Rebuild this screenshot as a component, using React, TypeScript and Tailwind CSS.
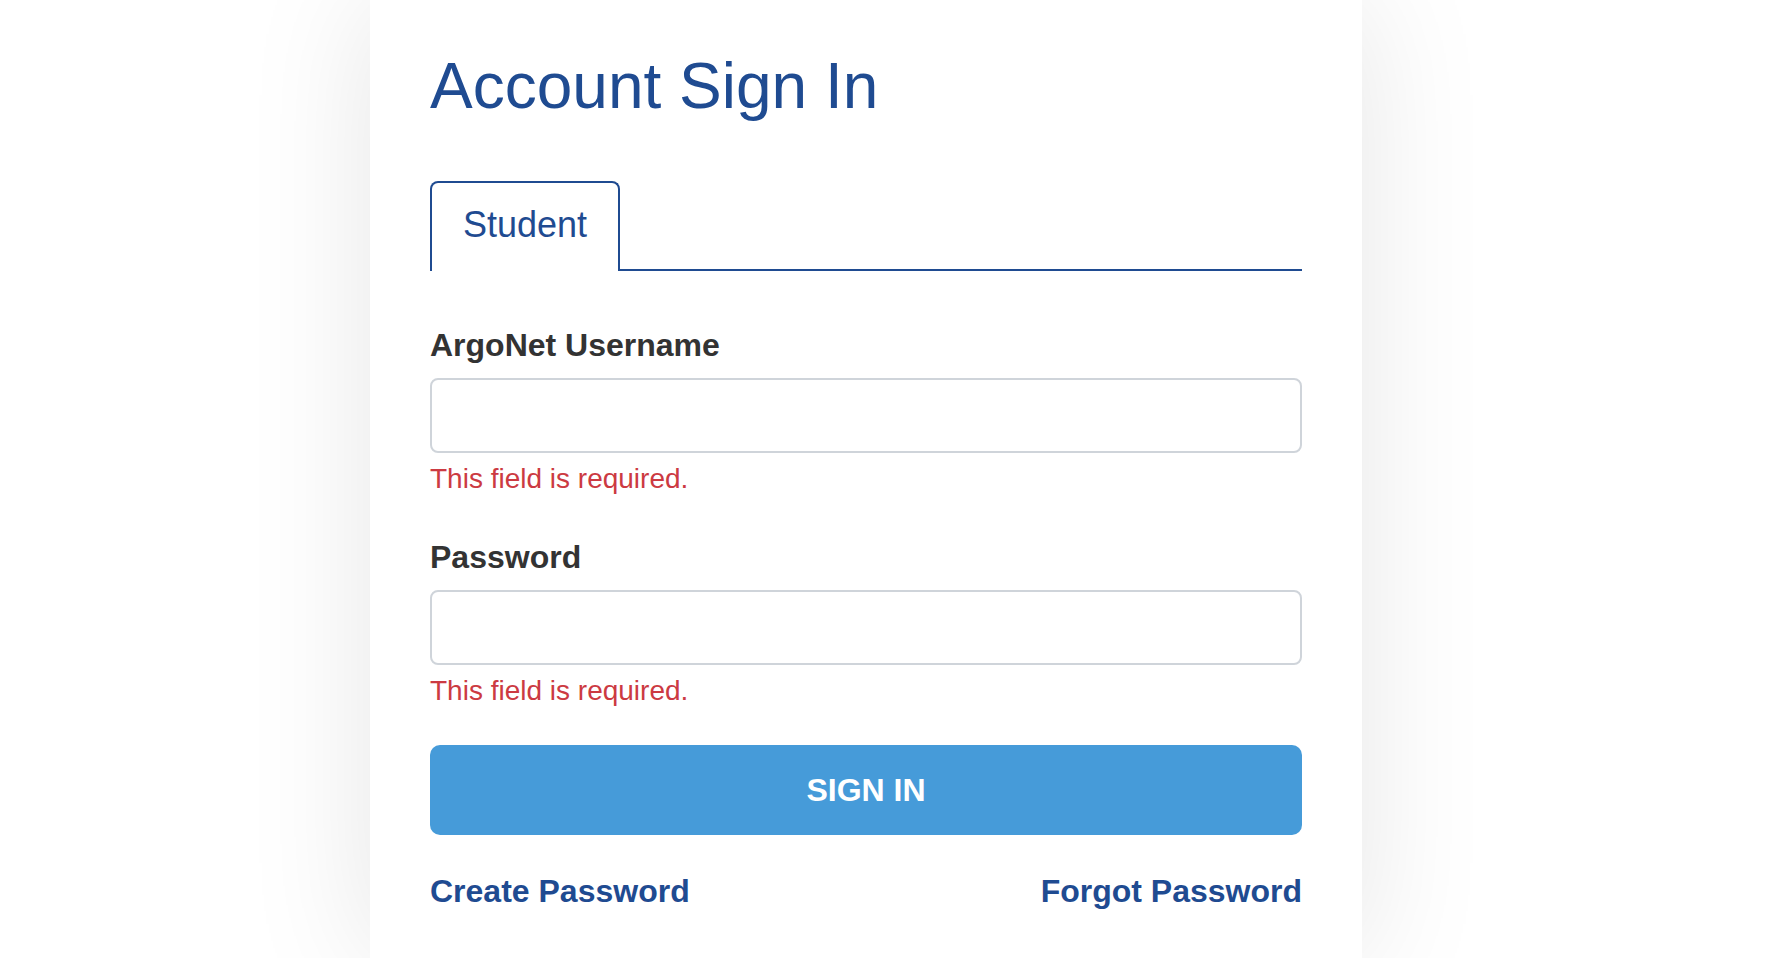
import React from "react";

const Field = ({ label }: { label: string }) => (
  <div className="flex flex-col">
    <label className="text-[32px] font-bold leading-none text-[#333333]">
      {label}
    </label>
    <input
      type={label === "Password" ? "password" : "text"}
      className="mt-[17px] h-[75px] w-full rounded-[8px] border-2 border-[#cfd4da] bg-white px-4 text-[28px] outline-none"
    />
    <p className="mt-[12px] text-[28px] leading-none text-[#cc3a42]">
      This field is required.
    </p>
  </div>
);

export default function App() {
  return (
    <div className="min-h-screen bg-white font-['Liberation_Sans',Arial,sans-serif]">
      <div className="ml-[370px] min-h-screen w-[992px] bg-white px-[60px] pt-[54px] pb-10 shadow-[0_0_120px_rgba(0,0,0,0.1)]">
        <h1 className="text-[64px] leading-none text-[#1f4b91]">
          Account Sign In
        </h1>

        {/* tabs */}
        <div className="mt-[63px] flex items-end">
          <button className="rounded-t-[8px] border-2 border-b-0 border-[#1f4b91] px-[31px] pt-[24px] pb-[28px] text-[36px] leading-none text-[#1f4b91]">
            Student
          </button>
          <div className="flex-1 border-b-2 border-[#1f4b91]" />
        </div>

        <div className="mt-[58px]">
          <Field label="ArgoNet Username" />
        </div>
        <div className="mt-[48px]">
          <Field label="Password" />
        </div>

        <button className="mt-[40px] flex h-[90px] w-full items-center justify-center rounded-[10px] bg-[#469bd9] text-[32px] font-bold leading-none text-white">
          SIGN IN
        </button>

        <div className="mt-[40px] flex items-center justify-between text-[32px] font-bold leading-none text-[#1f4b91]">
          <a href="#">Create Password</a>
          <a href="#">Forgot Password</a>
        </div>
      </div>
    </div>
  );
}
